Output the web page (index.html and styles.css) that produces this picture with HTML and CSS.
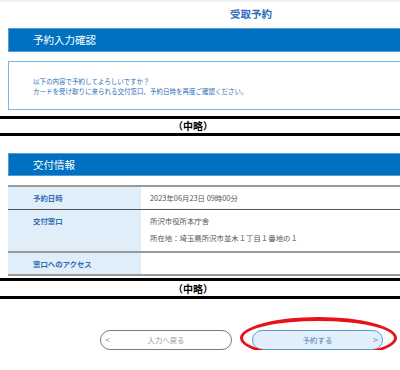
FILE: index.html
```html
<!DOCTYPE html>
<html lang="ja">
<head>
  <meta charset="UTF-8">
  <meta name="viewport" content="width=device-width, initial-scale=1.0">
  <title>受取予約</title>
  <link rel="stylesheet" href="styles.css">
</head>
<body>

  <div class="top-strip"></div>
  <h1 class="page-title">受取予約</h1>

  <div class="section">
    <h2 class="bar">予約入力確認</h2>
    <div class="message">
      <p>以下の内容で予約してよろしいですか？</p>
      <p>カードを受け取りに来られる交付窓口、予約日時を再度ご確認ください。</p>
    </div>
  </div>

  <div class="omit">（中略）</div>

  <div class="section">
    <h2 class="bar bar-second">交付情報</h2>
    <div class="info">
      <div class="info-row row-date">
        <div class="info-label">予約日時</div>
        <div class="info-value">2023年06月23日 09時00分</div>
      </div>
      <div class="info-row row-place">
        <div class="info-label">交付窓口</div>
        <div class="info-value">
          <p>所沢市役所本庁舎</p>
          <p class="address">所在地：埼玉県所沢市並木１丁目１番地の１</p>
        </div>
      </div>
      <div class="info-row row-access">
        <div class="info-label">窓口へのアクセス</div>
        <div class="info-value"></div>
      </div>
    </div>
  </div>

  <div class="omit omit-second">（中略）</div>

  <div class="actions">
    <button type="button" class="btn btn-back">
      <span class="arrow">&lt;</span>
      <span class="btn-text">入力へ戻る</span>
      <span class="arrow"></span>
    </button>
    <button type="button" class="btn btn-submit">
      <span class="arrow"></span>
      <span class="btn-text">予約する</span>
      <span class="arrow">&gt;</span>
      <span class="mark"></span>
    </button>
  </div>

</body>
</html>
```

FILE: styles.css
```css
body {
  font-family: "Noto Sans CJK JP", "Noto Sans", sans-serif;
  background-color: #fff;
  margin: 0;
  padding: 0;
  overflow: hidden;
}
p {
  margin: 0;
}
.top-strip {
  height: 2px;
  background-color: #f1f1f1;
}
.page-title {
  margin: 0;
  padding: 6px 0 8px 102px;
  text-align: center;
  font-size: 10.5px;
  line-height: 12px;
  font-weight: bold;
  color: #2f6fbd;
}
.section {
  margin-left: 8px;
  margin-right: -20px;
}
.bar {
  margin: 0;
  padding-left: 24px;
  border: 1px solid #5b9bd5;
  background-color: #0070c0;
  color: #fff;
  font-size: 10.5px;
  font-weight: normal;
  line-height: 22px;
}
.bar-second {
  margin-top: 17px;
  line-height: 21px;
}
.message {
  margin-top: 9px;
  padding: 14px 24px 13px;
  border: 1px solid #7fb2e0;
  color: #2a6ebb;
  font-size: 6.5px;
  line-height: 10px;
}
.omit {
  margin-top: 6px;
  border-top: 3px solid #000;
  border-bottom: 3px solid #000;
  text-align: center;
  font-size: 10px;
  font-weight: bold;
  line-height: 14px;
  padding-right: 14px;
}
.omit-second {
  margin-top: 2px;
  line-height: 15px;
}
.info {
  margin-top: 9px;
  border-top: 2px solid #9a9a9a;
}
.info-row {
  display: grid;
  grid-template-columns: 133px 1fr;
  border-bottom: 2px solid #9a9a9a;
  font-size: 7.4px;
  line-height: 12px;
}
.row-date {
  border-bottom: 1px solid #555;
}
.info-label {
  background-color: #e0eef9;
  color: #2f6db5;
  font-weight: bold;
  padding: 5px 0 5px 25px;
}
.info-value {
  color: #555;
  padding: 5px 0 5px 9px;
}
.row-place .info-value {
  padding-bottom: 7px;
}
.row-access .info-label {
  padding-bottom: 4px;
}
.address {
  margin-top: 5px;
}
.actions {
  display: flex;
  gap: 20px;
  margin-top: 31px;
  padding-left: 100px;
}
.btn {
  position: relative;
  display: grid;
  grid-template-columns: 13px 1fr 13px;
  align-items: center;
  width: 132px;
  height: 20px;
  padding: 0;
  border: 1px solid #7a7a7a;
  border-radius: 10px;
  background-color: #fff;
  color: #999;
  font-family: inherit;
  font-size: 7.4px;
  line-height: 18px;
}
.btn-text {
  text-align: center;
}
.arrow {
  font-size: 9px;
  text-align: center;
}
.btn-submit {
  width: 131px;
  border-color: #5b9bd5;
  background-color: #e2eefa;
  color: #4f7db4;
}
.btn-submit .arrow {
  color: #6a8fb8;
}
.mark {
  position: absolute;
  left: -13px;
  top: -14px;
  width: 157px;
  height: 42px;
  box-sizing: border-box;
  border: 3px solid #e8101a;
  border-top-width: 4px;
  border-bottom-width: 4px;
  border-radius: 50%;
}
```
